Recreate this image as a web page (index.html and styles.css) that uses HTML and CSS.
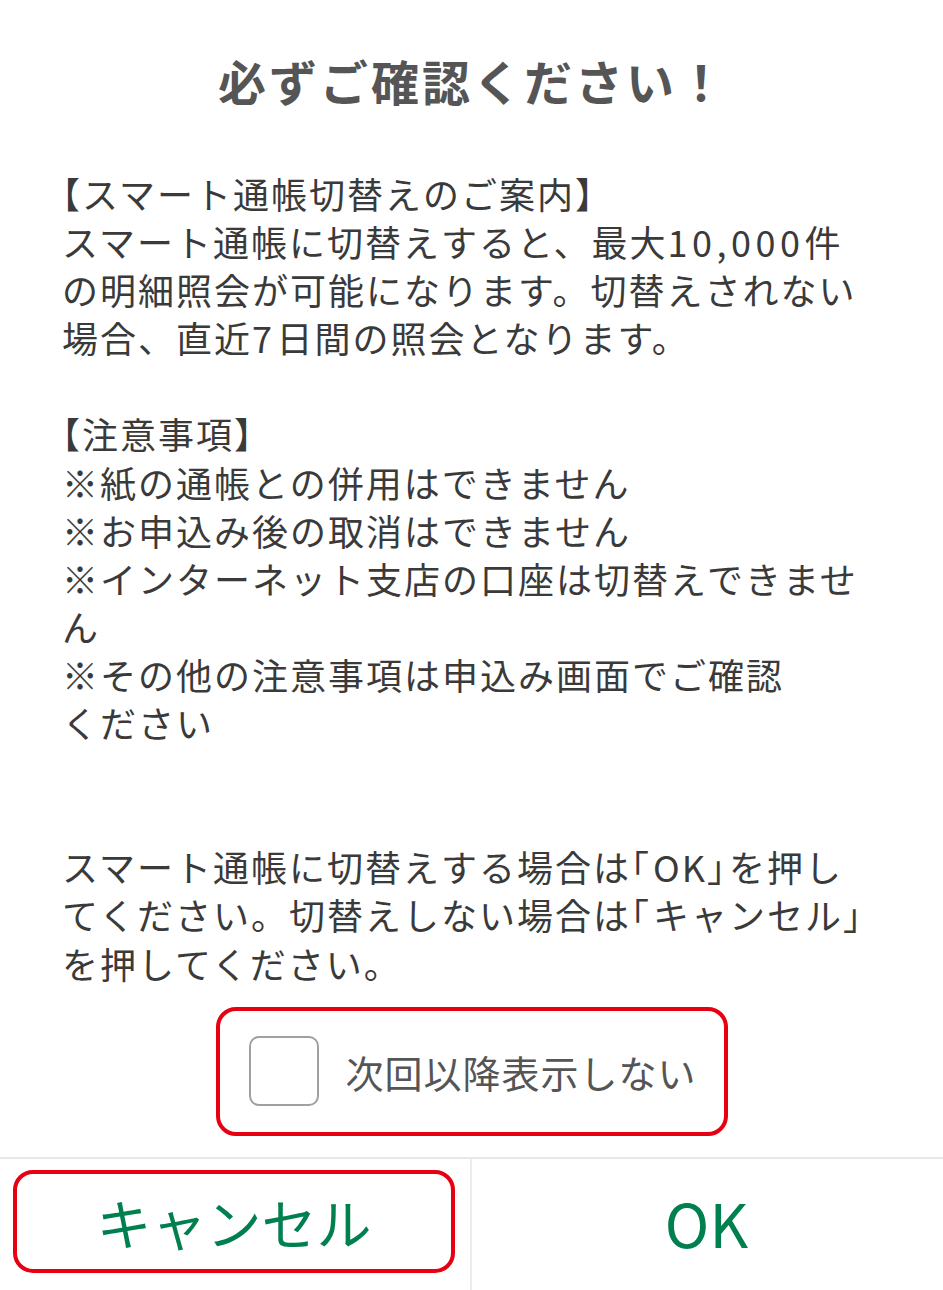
FILE: index.html
```html
<!DOCTYPE html>
<html lang="ja">
<head>
<meta charset="utf-8">
<title>必ずご確認ください！</title>
<link rel="stylesheet" href="styles.css">
</head>
<body>
<div class="dialog">
  <h1 class="title">必ずご確認ください！</h1>
  <div class="body">
    <p class="line"><span class="open">【</span>スマート通帳切替えのご案内】</p>
    <p class="line">スマート通帳に切替えすると、最大<span class="num">10,000</span>件</p>
    <p class="line">の明細照会が可能になります。切替えされない</p>
    <p class="line">場合、直近<span class="num">7</span>日間の照会となります。</p>
    <p class="line blank">&nbsp;</p>
    <p class="line"><span class="open">【</span>注意事項】</p>
    <p class="line">※紙の通帳との併用はできません</p>
    <p class="line">※お申込み後の取消はできません</p>
    <p class="line">※インターネット支店の口座は切替えできませ</p>
    <p class="line">ん</p>
    <p class="line">※その他の注意事項は申込み画面でご確認</p>
    <p class="line">ください</p>
    <p class="line blank">&nbsp;</p>
    <p class="line blank">&nbsp;</p>
    <p class="line">スマート通帳に切替えする場合は<span class="half">「</span>OK<span class="half">」</span>を押し</p>
    <p class="line">てください。切替えしない場合は<span class="half">「</span>キャンセル<span class="half">」</span></p>
    <p class="line">を押してください。</p>
  </div>
  <div class="check-wrap">
    <label class="check-box">
      <span class="check"></span>
      <span class="check-label">次回以降表示しない</span>
    </label>
  </div>
  <div class="buttons">
    <div class="btn-cell">
      <div class="btn cancel">キャンセル</div>
    </div>
    <div class="btn-cell ok-cell">
      <div class="btn ok">OK</div>
    </div>
  </div>
</div>
</body>
</html>
```
FILE: styles.css
```css
html, body {
  margin: 0;
  padding: 0;
  background: #ffffff;
}
body {
  font-family: "Noto Sans CJK JP", "Noto Sans", sans-serif;
  color: #3a3a3a;
}
.dialog {
  width: 943px;
  height: 1290px;
  display: flex;
  flex-direction: column;
  overflow: hidden;
}
.title {
  margin: 50px 0 0 0;
  height: 60px;
  line-height: 60px;
  font-size: 48px;
  font-weight: 700;
  color: #555555;
  text-align: center;
  letter-spacing: 3px;
  padding-left: 3px;
}
.body {
  margin-top: 59px;
  padding-left: 62px;
}
.line {
  margin: 0;
  font-size: 36px;
  line-height: 48.1px;
  height: 48.1px;
  letter-spacing: 2px;
  white-space: nowrap;
  color: #3a3a3a;
}
.open {
  font-feature-settings: "halt";
}
.half {
  font-feature-settings: "halt";
  letter-spacing: 4px;
}
.num {
  letter-spacing: 4.5px;
}
.check-wrap {
  margin-top: 20px;
  display: flex;
  justify-content: center;
}
.check-box {
  box-sizing: border-box;
  width: 512px;
  height: 129px;
  border: 4px solid #e60012;
  border-radius: 20px;
  display: flex;
  align-items: center;
  padding-left: 29px;
  gap: 27px;
}
.check {
  box-sizing: border-box;
  width: 70px;
  height: 70px;
  border: 2px solid #a0a0a0;
  border-radius: 10px;
  flex: none;
}
.check-label {
  font-size: 38px;
  letter-spacing: 1px;
  color: #555555;
  font-weight: 400;
}
.buttons {
  margin-top: 21px;
  border-top: 2px solid #e8e8e8;
  flex: 1;
  display: grid;
  grid-template-columns: 470px 1fr;
}
.btn-cell {
  display: flex;
  padding: 11px 15px 17px 13px;
}
.ok-cell {
  border-left: 2px solid #ececec;
}
.btn {
  flex: 1;
  display: flex;
  align-items: center;
  justify-content: center;
  font-size: 58px;
  color: #007f4f;
  box-sizing: border-box;
}
.cancel {
  border: 4px solid #e60012;
  border-radius: 20px;
  font-size: 55px;
}
.ok {
  font-size: 60px;
}
```
